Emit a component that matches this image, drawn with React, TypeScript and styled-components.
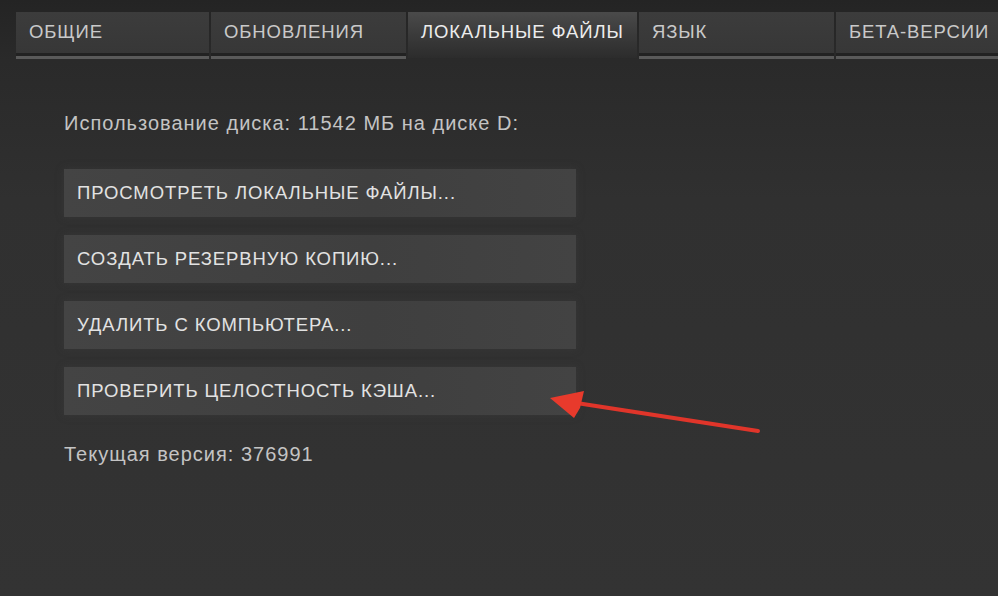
import React from "react"
import styled, { createGlobalStyle } from "styled-components"

const GlobalStyle = createGlobalStyle`
    html, body {
        margin:0;
        padding:0;
        background:#2f2f2f;
    }
    body {
        font-family:"Liberation Sans", Arial, sans-serif;
    }
`

const Window = styled.div`
    position:relative;
    width:998px;
    height:596px;
    overflow:hidden;
    background:linear-gradient(180deg, #242424 0px, #2a2a2a 60px, #303030 200px, #333333 596px);
`

const TabBar = styled.div`
    display:flex;
    gap:2px;
    padding:12px 0 0 16px;
    height:46px;
    box-sizing:border-box;
    align-items:flex-start;
`

const Tab = styled.div<{ $active?: boolean; $w: number }>`
    flex:0 0 ${(p) => p.$w}px;
    box-sizing:border-box;
    height:${(p) => (p.$active ? 46 : 44)}px;
    padding:0 13px;
    display:flex;
    align-items:center;
    padding-bottom:${(p) => (p.$active ? 6 : 2)}px;
    font-size:18.5px;
    letter-spacing:0.9px;
    color:${(p) => (p.$active ? "#ececec" : "#c9c9c9")};
    background:${(p) =>
        p.$active
            ? "linear-gradient(180deg, #4a4a4a 0%, #3c3c3c 45%, #2c2c2c 100%)"
            : "linear-gradient(180deg, #3c3c3c 0%, #373737 100%)"};
    border-bottom:${(p) => (p.$active ? "none" : "3px solid #222")};
    box-shadow:${(p) => (p.$active ? "none" : "0 3px 0 0 #5a5a5a")};
    white-space:nowrap;
`

const Content = styled.div`
    display:flex;
    flex-direction:column;
    align-items:flex-start;
    padding:65px 0 0 64px;
`

const Label = styled.div<{ $mt?: number }>`
    font-size:20px;
    letter-spacing:1px;
    color:#c4c4c4;
    line-height:24px;
    margin-top:${(p) => p.$mt ?? 0}px;
`

const Buttons = styled.div`
    display:flex;
    flex-direction:column;
    gap:18px;
    margin-top:34px;
`

const Button = styled.div`
    width:512px;
    height:48px;
    box-sizing:border-box;
    padding:0 13px;
    display:flex;
    align-items:center;
    font-size:18.5px;
    letter-spacing:0.9px;
    color:#e2e2e2;
    background:linear-gradient(90deg, #444444 0%, #3f3f3f 60%, #434343 100%);
    box-shadow:0 0 8px rgba(70,70,70,0.35);
    white-space:nowrap;
`

const Arrow = styled.svg`
    position:absolute;
    left:540px;
    top:380px;
    width:230px;
    height:65px;
    overflow:visible;
`

const tabs = [
    { label: "ОБЩИЕ", w: 193 },
    { label: "ОБНОВЛЕНИЯ", w: 195 },
    { label: "ЛОКАЛЬНЫЕ ФАЙЛЫ", w: 228, active: true },
    { label: "ЯЗЫК", w: 195 },
    { label: "БЕТА-ВЕРСИИ", w: 170 },
]

const actions = [
    "ПРОСМОТРЕТЬ ЛОКАЛЬНЫЕ ФАЙЛЫ...",
    "СОЗДАТЬ РЕЗЕРВНУЮ КОПИЮ...",
    "УДАЛИТЬ С КОМПЬЮТЕРА...",
    "ПРОВЕРИТЬ ЦЕЛОСТНОСТЬ КЭША...",
]

const App = () => {
    return (
        <Window>
            <GlobalStyle />
            <TabBar>
                {tabs.map((t) => (
                    <Tab key={t.label} $w={t.w} $active={t.active}>
                        {t.label}
                    </Tab>
                ))}
            </TabBar>
            <Content>
                <Label>Использование диска: 11542 МБ на диске D:</Label>
                <Buttons>
                    {actions.map((a) => (
                        <Button key={a}>{a}</Button>
                    ))}
                </Buttons>
                <Label $mt={27}>Текущая версия: 376991</Label>
            </Content>
            {/* red pointer to the verify button */}
            <Arrow viewBox="540 380 230 65">
                <line x1="758" y1="431" x2="570" y2="402" stroke="#e0352a" strokeWidth="4" strokeLinecap="round" />
                <polygon points="550,398 584,391 580,408 574,418" fill="#e83a2c" />
            </Arrow>
        </Window>
    )
}

export default App
